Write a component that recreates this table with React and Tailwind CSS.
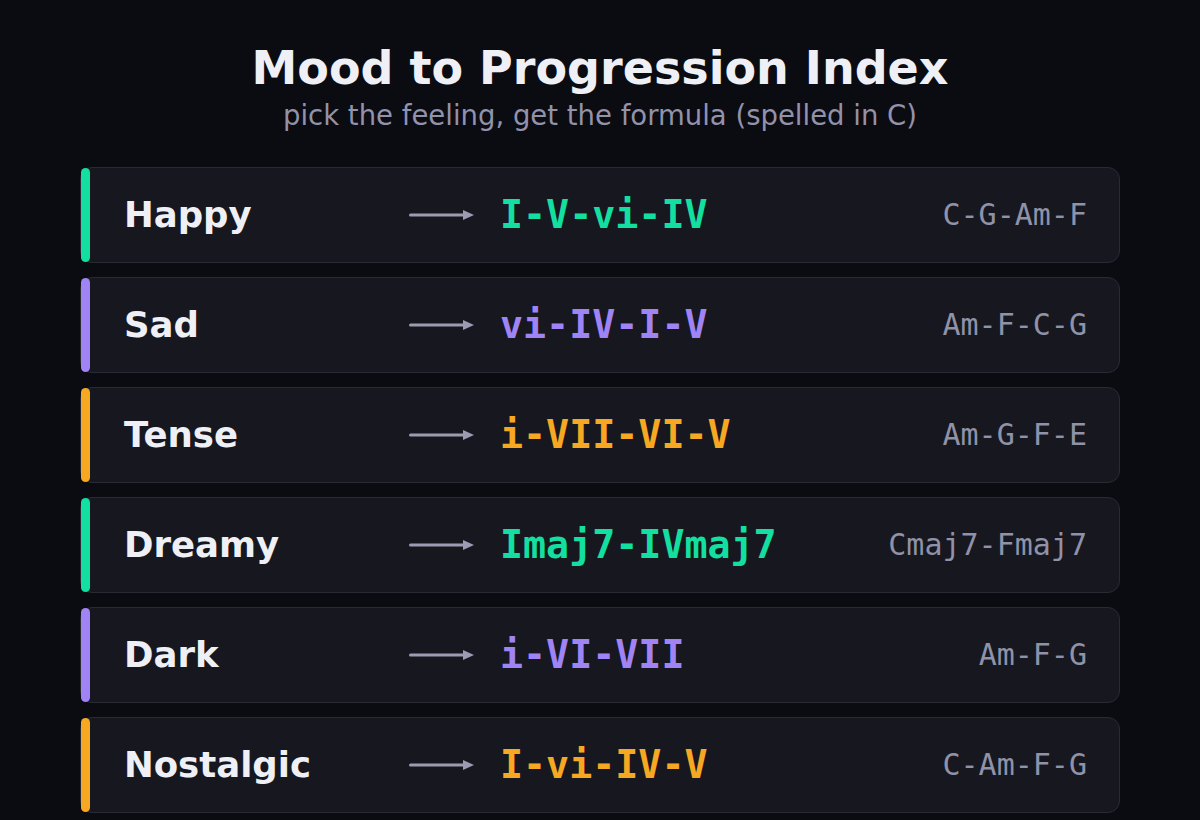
const moods = [
  { name: "Happy", prog: "I-V-vi-IV", chords: "C-G-Am-F", color: "green" },
  { name: "Sad", prog: "vi-IV-I-V", chords: "Am-F-C-G", color: "purple" },
  { name: "Tense", prog: "i-VII-VI-V", chords: "Am-G-F-E", color: "orange" },
  { name: "Dreamy", prog: "Imaj7-IVmaj7", chords: "Cmaj7-Fmaj7", color: "green" },
  { name: "Dark", prog: "i-VI-VII", chords: "Am-F-G", color: "purple" },
  { name: "Nostalgic", prog: "I-vi-IV-V", chords: "C-Am-F-G", color: "orange" },
];

// full class names per accent so tailwind picks them up
const accents = {
  green: { bar: "bg-[#12dfa0]", text: "text-[#12dfa0]" },
  purple: { bar: "bg-[#a084f6]", text: "text-[#a084f6]" },
  orange: { bar: "bg-[#f7a823]", text: "text-[#f7a823]" },
};

function Arrow() {
  return (
    <svg width="66" height="12" viewBox="0 0 66 12" className="shrink-0">
      <line x1="1.5" y1="6" x2="56" y2="6" stroke="#9c9bb2" strokeWidth="3" strokeLinecap="round" />
      <path d="M54 1 L65 6 L54 11 Z" fill="#9c9bb2" />
    </svg>
  );
}

function MoodRow({ mood }) {
  const accent = accents[mood.color];
  return (
    <div className="relative h-[96px] rounded-[12px] border border-[#2a2a35] bg-[#17171f] flex items-center">
      <div className={`absolute left-0 top-0 bottom-0 w-[9px] rounded-full ${accent.bar}`}></div>
      <div className="w-[328px] pl-[43px] font-['DejaVu_Sans',sans-serif] font-bold text-[35.5px] text-[#eef0f5]">
        {mood.name}
      </div>
      <Arrow />
      <div className={`ml-[25px] font-['DejaVu_Sans_Mono',monospace] font-bold text-[38.3px] ${accent.text}`}>
        {mood.prog}
      </div>
      <div className="ml-auto pr-[32px] font-['DejaVu_Sans_Mono',monospace] text-[30px] text-[#8f92a8]">
        {mood.chords}
      </div>
    </div>
  );
}

export default function App() {
  return (
    <div className="w-[1200px] h-[820px] overflow-hidden bg-[#0b0b12]">
      <div className="flex flex-col items-center pt-[45px]">
        <h1 className="font-['DejaVu_Sans',sans-serif] font-bold text-[46px] leading-none text-[#eef0f6]">
          Mood to Progression Index
        </h1>
        <p className="mt-[11px] font-['DejaVu_Sans',sans-serif] text-[27.5px] leading-none text-[#9292ab]">
          pick the feeling, get the formula (spelled in C)
        </p>
      </div>
      <div className="mt-[37px] mx-[80px] flex flex-col gap-[14px]">
        {moods.map((mood) => (
          <MoodRow key={mood.name} mood={mood} />
        ))}
      </div>
    </div>
  );
}
